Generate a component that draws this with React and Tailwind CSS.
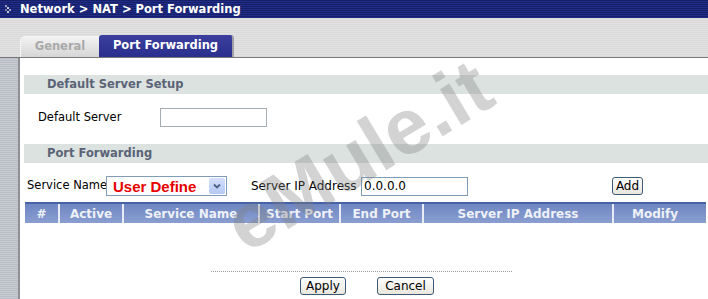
import React from "react";

const V = { fontFamily: '"DejaVu Sans", Verdana, sans-serif' };

function Btn({ children, w }) {
  return (
    <div
      className="flex h-[18px] items-center justify-center rounded-[3px] border border-[#3c5a78] bg-[linear-gradient(#ffffff,#e8e6dc)] text-[12px] text-black"
      style={{ ...V, width: w }}
    >
      {children}
    </div>
  );
}

function Section({ title }) {
  return (
    <div
      className="flex h-[19px] items-center bg-[#dce2e0] pl-[23px] text-[11.5px] font-bold text-[#5b6377]"
      style={V}
    >
      {title}
    </div>
  );
}

const cols = [
  ["#", 33],
  ["Active", 64],
  ["Service Name", 136],
  ["Start Port", 81],
  ["End Port", 83],
  ["Server IP Address", 190],
  ["Modify", 84],
];

export default function App() {
  return (
    <div className="relative h-[299px] w-[708px] overflow-hidden bg-white" style={V}>
      {/* title bar */}
      <div className="flex h-[18px] items-center bg-[repeating-linear-gradient(180deg,#16206a_0px,#16206a_1px,#212d84_1px,#212d84_2px)] pl-[5px]">
        <svg width="8" height="8" viewBox="0 0 8 8" className="mr-[7px]">
          <rect x="0" y="0" width="2" height="2" fill="#9aa0b8" />
          <rect x="2" y="2" width="2" height="2" fill="#c8ccd8" />
          <rect x="4" y="4" width="2" height="2" fill="#9aa0b8" />
          <rect x="2" y="6" width="2" height="2" fill="#c8ccd8" />
          <rect x="0" y="4" width="2" height="2" fill="#7a809c" />
        </svg>
        <span className="pt-[1px] text-[11.5px] font-bold leading-none text-white">
          Network &gt; NAT &gt; Port Forwarding
        </span>
      </div>

      {/* tab strip */}
      <div className="flex h-[40px] items-end border-b border-[#7a7a7a] bg-[repeating-linear-gradient(180deg,#d9d9d9_0px,#d9d9d9_1px,#e2e2e2_1px,#e2e2e2_2px)] pl-[20px]">
        <div className="flex h-[21px] w-[79px] items-center justify-center rounded-tl-[5px] border-l border-t border-[#f4f4f4] bg-[linear-gradient(#f2f2f2,#d6d6d6)] text-[11.5px] font-bold text-[#a9a9a9]">
          General
        </div>
        <div className="flex h-[22px] w-[135px] items-center justify-center rounded-t-[3px] border-r-2 border-[#a0a0a8] bg-[linear-gradient(#3a3f9e,#2a2e8c)] text-[11.5px] font-bold text-white">
          Port Forwarding
        </div>
      </div>

      {/* body */}
      <div className="flex h-[241px]">
        <div className="w-[20px] border-r-2 border-[#8c8f96] bg-[repeating-linear-gradient(180deg,#b9bdc5_0px,#b9bdc5_1px,#c8ccd2_1px,#c8ccd2_2px)]" />
        <div className="flex flex-1 flex-col pl-[4px]">
          <div className="mt-[17px]">
            <Section title="Default Server Setup" />
          </div>
          <div className="mt-[14px] flex h-[19px] items-center pl-[14px]">
            <span className="w-[122px] text-[11.5px] text-black">Default Server</span>
            <div className="h-[19px] w-[107px] border border-[#a5acb2] bg-white" />
          </div>
          <div className="mt-[17px]">
            <Section title="Port Forwarding" />
          </div>
          <div className="mt-[13px] flex h-[20px] items-center pl-[3px]">
            <span className="w-[79px] whitespace-nowrap text-[11.5px] text-black">Service Name</span>
            <div className="flex h-[20px] w-[121px] items-center border border-[#7f9db9] bg-white">
              <span
                className="ml-[6px] flex-1 text-[15px] font-bold leading-none text-[#e60000]"
                style={{ fontFamily: '"Liberation Sans", Arial, sans-serif' }}
              >
                User Define
              </span>
              <div className="mr-[1px] flex h-[16px] w-[16px] items-center justify-center rounded-[2px] bg-[linear-gradient(#d4e0fc,#b4c8f4)]">
                <svg width="8" height="6" viewBox="0 0 8 6">
                  <path d="M1 1.5 L4 4.5 L7 1.5" fill="none" stroke="#4d6185" strokeWidth="1.8" />
                </svg>
              </div>
            </div>
            <span className="ml-[24px] w-[110px] whitespace-nowrap text-[12px] text-black">
              Server IP Address
            </span>
            <div className="flex h-[19px] w-[107px] items-center border border-[#7f9db9] bg-white pl-[2px] text-[12px] text-black">
              0.0.0.0
            </div>
            <div className="ml-[144px]">
              <div className="flex h-[18px] w-[31px] items-center justify-center rounded-[3px] border border-[#3c5a78] bg-[linear-gradient(#ffffff,#e8e6dc)] text-[12px] text-black">
                Add
              </div>
            </div>
          </div>
          <div className="ml-[1px] mt-[6px] flex h-[21px] w-[681px] border-t-2 border-[#4663a6] bg-[linear-gradient(#6e86c2,#8a9ed0)]">
            {cols.map(([t, w], i) => (
              <div
                key={t}
                className={`flex items-center justify-center text-[12px] font-bold text-[#eef1f8] ${
                  i > 0 ? "border-l-2 border-[#e8ecf6]" : ""
                }`}
                style={{ width: w }}
              >
                {t}
              </div>
            ))}
          </div>
          <div className="ml-[187px] mt-[48px] w-[301px] border-t border-dotted border-[#9a9a9a]" />
          <div className="ml-[276px] mt-[5px] flex gap-[31px]">
            <Btn w={46}>Apply</Btn>
            <Btn w={57}>Cancel</Btn>
          </div>
        </div>
      </div>

      {/* watermark */}
      <div
        className="pointer-events-none absolute left-[358px] top-[155px] -translate-x-1/2 -translate-y-1/2 -rotate-[31deg] whitespace-nowrap text-[79px] font-bold leading-none text-[#808080]/35"
        style={{ fontFamily: '"Liberation Sans", Arial, sans-serif' }}
      >
        eMule.it
      </div>
    </div>
  );
}
